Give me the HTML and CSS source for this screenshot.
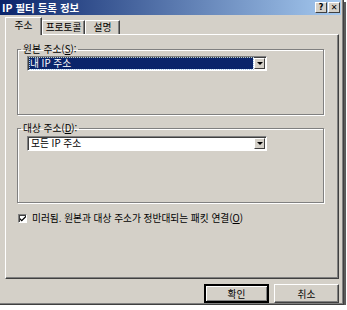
FILE: index.html
```html
<!DOCTYPE html>
<html lang="ko">
<head>
    <meta charset="UTF-8">
    <title>IP 필터 등록 정보</title>
    <link rel="stylesheet" href="styles.css">
</head>
<body>
    <div class="dialog">
        <div class="titlebar">
            <span class="title">IP 필터 등록 정보</span>
            <div class="caption-buttons">
                <span class="cap-btn">?</span>
                <span class="cap-btn">✕</span>
            </div>
        </div>

        <div class="content">
            <div class="tabs">
                <span class="tab active">주소</span>
                <span class="tab">프로토콜</span>
                <span class="tab">설명</span>
            </div>

            <div class="panel">
                <fieldset class="group group-src">
                    <legend>원본 주소(<u>S</u>):</legend>
                    <div class="combo selected">
                        <span class="combo-text"><span class="focus">내 IP 주소</span></span>
                        <span class="combo-arrow"></span>
                    </div>
                </fieldset>

                <fieldset class="group group-dest">
                    <legend>대상 주소(<u>D</u>):</legend>
                    <div class="combo">
                        <span class="combo-text">모든 IP 주소</span>
                        <span class="combo-arrow"></span>
                    </div>
                </fieldset>

                <label class="check-row">
                    <span class="checkbox">
                        <svg width="7" height="7" viewBox="0 0 7 7"><path d="M0 3 L2 5 L7 0 L7 2 L2 7 L0 5 Z" fill="#000"/></svg>
                    </span>
                    미러됨. 원본과 대상 주소가 정반대되는 패킷 연결(<u>O</u>)
                </label>
            </div>

            <div class="buttons">
                <button class="btn default">확인</button>
                <button class="btn">취소</button>
            </div>
        </div>
    </div>
</body>
</html>
```

FILE: styles.css
```css
body {
    margin: 0;
    background-color: #ffffff;
    font-family: "Noto Sans CJK KR", "DejaVu Sans", sans-serif;
    font-size: 9.7px;
    color: #000;
}

.dialog {
    width: 344px;
    height: 305px;
    box-sizing: border-box;
    background-color: #d4d0c8;
    border-right: 1px solid #404040;
    border-bottom: 1px solid #404040;
    box-shadow: inset -1px -1px 0 #808080, 2px 2px 0 #5a5a5a;
    padding: 0 2px 1px 0;
    display: flex;
    flex-direction: column;
}

.titlebar {
    height: 15px;
    flex-shrink: 0;
    background: linear-gradient(to right, #0a246a, #a6caf0);
    color: #fff;
    display: flex;
    align-items: center;
    justify-content: space-between;
    padding: 0 1px 0 2px;
}

.title {
    font-weight: bold;
    font-size: 10.5px;
    line-height: 15px;
}

.caption-buttons {
    display: flex;
}

.cap-btn {
    width: 12px;
    height: 11px;
    box-sizing: border-box;
    background-color: #d4d0c8;
    color: #000;
    font-family: "DejaVu Sans", sans-serif;
    font-weight: bold;
    font-size: 8px;
    line-height: 9px;
    text-align: center;
    border: 1px solid;
    border-color: #fff #404040 #404040 #fff;
}

.cap-btn + .cap-btn {
    margin-left: 1px;
}

.content {
    flex: 1;
    padding: 2px 2px 0 5px;
    display: flex;
    flex-direction: column;
}

.tabs {
    display: flex;
    align-items: flex-end;
    height: 17px;
    flex-shrink: 0;
    position: relative;
    z-index: 1;
}

.tab {
    height: 14px;
    line-height: 13px;
    border: 1px solid;
    border-color: #fff #404040 transparent #fff;
    border-bottom: none;
    box-shadow: inset -1px 0 0 #808080;
    background-color: #d4d0c8;
    text-align: center;
    box-sizing: border-box;
}

.tab.active {
    height: 18px;
    line-height: 15px;
    width: 37px;
    margin-bottom: -1px;
}

.tab:nth-child(2) {
    width: 43px;
}

.tab:nth-child(3) {
    width: 35px;
}

.panel {
    height: 245px;
    flex-shrink: 0;
    box-sizing: border-box;
    border: 1px solid;
    border-color: #fff #404040 #404040 #fff;
    box-shadow: inset -1px -1px 0 #808080;
    padding: 9px 14px 0 11px;
}

.group {
    margin: 0;
    padding: 0 0 0 9px;
    border: 1px solid #808080;
    box-shadow: 1px 1px 0 #fff, inset 1px 1px 0 #fff;
}

.group legend {
    padding: 0 2px;
    margin-left: -6px;
    line-height: 10px;
}

.group-src {
    height: 69px;
}

.group-src .combo {
    margin-top: 2px;
}

.group-dest {
    margin-top: 8px;
    height: 78px;
}

.combo {
    margin-top: 3px;
    width: 240px;
    height: 15px;
    box-sizing: border-box;
    background-color: #fff;
    border: 1px solid;
    border-color: #808080 #fff #fff #808080;
    box-shadow: inset 1px 1px 0 #404040;
    display: flex;
    padding: 1px;
}

.combo-text {
    flex: 1;
    line-height: 11px;
    padding-left: 2px;
    display: flex;
}

.combo.selected .combo-text {
    background-color: #0a246a;
    color: #fff;
    padding-left: 1px;
    margin-right: 1px;
}

.focus {
    outline: 1px dotted #a6caf0;
    width: 100%;
}

.combo-arrow {
    width: 11px;
    height: 11px;
    box-sizing: border-box;
    background-color: #d4d0c8;
    border: 1px solid;
    border-color: #fff #404040 #404040 #fff;
    display: flex;
    align-items: center;
    justify-content: center;
}

.combo-arrow::after {
    content: "";
    border-left: 3px solid transparent;
    border-right: 3px solid transparent;
    border-top: 3px solid #000;
}

.check-row {
    display: flex;
    align-items: center;
    margin-top: 9px;
    margin-left: 1px;
    line-height: 12px;
}

.checkbox {
    width: 9px;
    height: 9px;
    box-sizing: border-box;
    background-color: #fff;
    border: 1px solid;
    border-color: #808080 #fff #fff #808080;
    box-shadow: inset 1px 1px 0 #404040;
    display: flex;
    align-items: center;
    justify-content: center;
    margin-right: 5px;
}

.checkbox svg {
    margin-left: 1px;
    margin-top: 1px;
}

.buttons {
    display: flex;
    justify-content: flex-end;
    gap: 5px;
    margin-top: 5px;
}

.btn {
    width: 65px;
    height: 19px;
    font-family: "Noto Sans CJK KR", "DejaVu Sans", sans-serif;
    font-size: 9.7px;
    background-color: #d4d0c8;
    border: 1px solid;
    border-color: #fff #404040 #404040 #fff;
    box-shadow: inset -1px -1px 0 #808080;
    padding: 0;
    color: #000;
}

.btn.default {
    border: 2px solid #000;
    box-shadow: inset 1px 1px 0 #fff, inset -1px -1px 0 #808080;
}
```
